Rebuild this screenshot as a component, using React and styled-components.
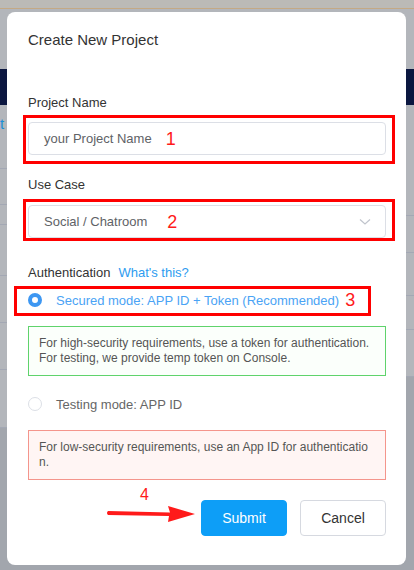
import styled, { createGlobalStyle } from "styled-components";

const GlobalStyle = createGlobalStyle`
    html, body {
        margin: 0;
        padding: 0;
    }
    body {
        font-family: "Liberation Sans", Arial, sans-serif;
        width: 414px;
        height: 570px;
        overflow: hidden;
    }
`;

const Page = styled.div`
    position: relative;
    width: 414px;
    height: 570px;
    background: #b3b6bb;
    display: flex;
    flex-direction: column;
    overflow: hidden;
`;

const TopStrip = styled.div`
    height: 8px;
    background: #bbbab6;
    border-bottom: 1px solid #c4a984;
`;

const NavBand = styled.div`
    margin-top: 60px;
    height: 36px;
    background: #0b1740;
`;

const Body = styled.div`
    flex: 1;
    display: flex;
`;

const Column = styled.div`
    flex: 1;
    display: flex;
    flex-direction: column;
`;

const LinkStub = styled.div`
    padding-top: 10px;
    font-size: 15px;
    color: #1a8fd8;
`;

const Row = styled.div`
    height: ${(p) => p.h}px;
    box-sizing: border-box;
    border-bottom: 1px solid #a3a8b4;
`;

const Footer = styled.div`
    flex: 1;
    background: #a2a6ad;
`;

const Modal = styled.div`
    position: absolute;
    left: 7px;
    top: 12px;
    width: 399px;
    height: 553px;
    box-sizing: border-box;
    background: #fff;
    border-radius: 8px;
    padding: 18px 20px 0 21px;
    display: flex;
    flex-direction: column;
`;

const Title = styled.div`
    font-size: 15px;
    line-height: 20px;
    color: #333;
`;

const Label = styled.div`
    font-size: 13px;
    line-height: 18px;
    color: #333;
    margin-top: ${(p) => p.mt}px;
    display: flex;
    gap: 8px;
`;

const Help = styled.span`
    color: #2d9cf0;
`;

const Annotated = styled.div`
    position: relative;
    margin-top: ${(p) => p.mt}px;
    &::after {
        content: "";
        position: absolute;
        left: ${(p) => p.box[0]}px;
        top: ${(p) => p.box[1]}px;
        right: ${(p) => p.box[2]}px;
        bottom: ${(p) => p.box[3]}px;
        border: 3px solid #ff0000;
        pointer-events: none;
    }
`;

const Field = styled.div`
    height: 33px;
    box-sizing: border-box;
    border: 1px solid #dcdfe6;
    border-radius: 4px;
    display: flex;
    align-items: center;
    padding: 0 14px 0 15px;
    font-size: 13px;
    color: #606266;
`;

const Mark = styled.span`
    color: #ff1a1a;
    font-size: 18px;
    font-weight: 300;
    margin-left: ${(p) => p.ml}px;
    line-height: 18px;
`;

const Chevron = styled.svg`
    margin-left: auto;
`;

const RadioRow = styled.div`
    display: flex;
    align-items: center;
    height: 20px;
    margin-top: ${(p) => p.mt || 0}px;
    font-size: 13px;
    color: ${(p) => (p.active ? "#4aa3f5" : "#666")};
`;

const RadioDot = styled.span`
    width: 14px;
    height: 14px;
    box-sizing: border-box;
    border-radius: 50%;
    margin-right: 14px;
    border: ${(p) => (p.checked ? "4px solid #3d97f2" : "1px solid #dcdfe6")};
    background: #fff;
`;

const Note = styled.div`
    margin-top: ${(p) => p.mt}px;
    box-sizing: border-box;
    height: 50px;
    padding: 9px 10px;
    font-size: 12px;
    line-height: 15px;
    color: #555;
    border: 1px solid ${(p) => (p.tone === "ok" ? "#5fd36c" : "#f4958c")};
    background: ${(p) => (p.tone === "ok" ? "#fbfffb" : "#fff5f4")};
    word-break: break-all;
`;

const Actions = styled.div`
    margin-top: 20px;
    display: flex;
    justify-content: flex-end;
    align-items: center;
    gap: 13px;
    position: relative;
`;

const Button = styled.button`
    width: 86px;
    height: 36px;
    border-radius: 4px;
    font-family: inherit;
    font-size: 14px;
    border: 1px solid ${(p) => (p.primary ? "#0d9ef7" : "#d6d9e0")};
    background: ${(p) => (p.primary ? "#0d9ef7" : "#fff")};
    color: ${(p) => (p.primary ? "#fff" : "#333")};
`;

const Pointer = styled.div`
    position: absolute;
    left: 78px;
    top: -12px;
    width: 92px;
    height: 34px;
`;

const PointerMark = styled.span`
    position: absolute;
    left: 34px;
    top: -2px;
    color: #ff1a1a;
    font-size: 16px;
    font-weight: 300;
`;

const PointerArrow = styled.svg`
    position: absolute;
    left: 0;
    top: 0;
`;

function App() {
    return (
        <>
            <GlobalStyle />
            <Page>
                <TopStrip />
                <NavBand />
                <Body>
                    <Column>
                        <Row h={64}>
                            <LinkStub>t</LinkStub>
                        </Row>
                        <Row h={36} />
                        <Row h={20} />
                        <Row h={51} />
                        <Row h={47} />
                        <Row h={47} />
                        <Row h={58} />
                        <Footer />
                    </Column>
                    <Column>
                        <Row h={111} />
                        <Row h={37} />
                        <Row h={43} />
                        <Row h={34} />
                        <Row h={47} />
                        <Footer />
                    </Column>
                </Body>

                <Modal>
                    <Title>Create New Project</Title>

                    <Label mt={44}>Project Name</Label>
                    <Annotated mt={10} box={[-5, -7, -9, -9]}>
                        <Field>
                            your Project Name
                            <Mark ml={14}>1</Mark>
                        </Field>
                    </Annotated>

                    <Label mt={21}>Use Case</Label>
                    <Annotated mt={11} box={[-5, -6, -9, -3]}>
                        <Field>
                            Social / Chatroom
                            <Mark ml={20}>2</Mark>
                            <Chevron width="12" height="8" viewBox="0 0 12 8">
                                <path d="M1 1.5 L6 6 L11 1.5" fill="none" stroke="#c0c4cc" strokeWidth="1.2" />
                            </Chevron>
                        </Field>
                    </Annotated>

                    <Label mt={26}>
                        Authentication <Help>What's this?</Help>
                    </Label>

                    <Annotated mt={8} box={[-14, -4, 15, -6]}>
                        <RadioRow active>
                            <RadioDot checked />
                            Secured mode: APP ID + Token (Recommended)
                            <Mark ml={6}>3</Mark>
                        </RadioRow>
                    </Annotated>

                    <Note tone="ok" mt={16}>
                        For high-security requirements, use a token for authentication.
                        For testing, we provide temp token on Console.
                    </Note>

                    <RadioRow mt={18}>
                        <RadioDot />
                        Testing mode: APP ID
                    </RadioRow>

                    <Note tone="bad" mt={16}>
                        For low-security requirements, use an App ID for authenticatio n.
                    </Note>

                    <Actions>
                        <Pointer>
                            <PointerMark>4</PointerMark>
                            <PointerArrow width="92" height="34" viewBox="0 0 92 34">
                                <path d="M2 23 L64 24.5 L62 18 L89 26 L62 34 L63 28 L2 27 Q0 25 2 23 Z" fill="#ff1a1a" />
                            </PointerArrow>
                        </Pointer>
                        <Button primary>Submit</Button>
                        <Button>Cancel</Button>
                    </Actions>
                </Modal>
            </Page>
        </>
    );
}

export default App;
